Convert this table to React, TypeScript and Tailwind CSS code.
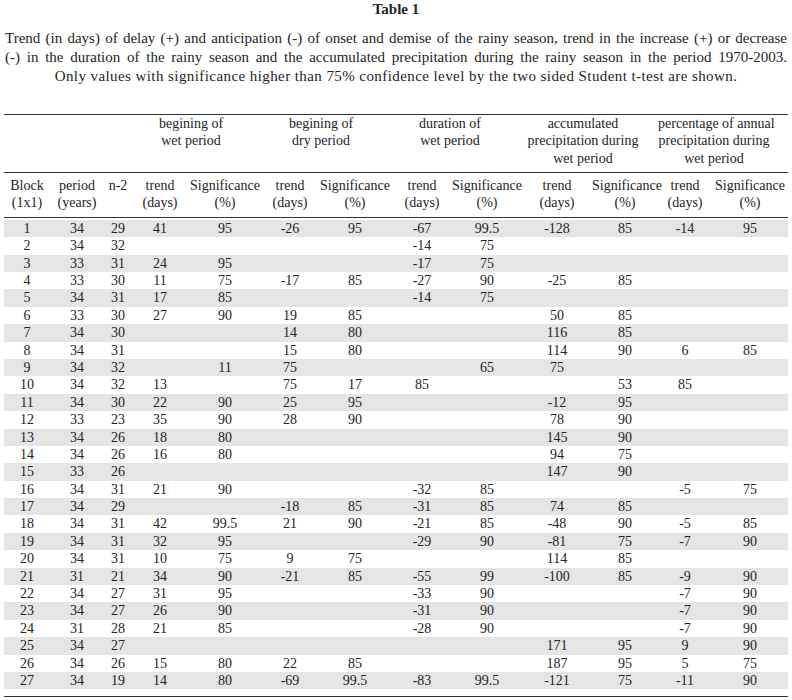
import React from "react";

const rows: string[][] = [
  ["1", "34", "29", "41", "95", "-26", "95", "-67", "99.5", "-128", "85", "-14", "95"],
  ["2", "34", "32", "", "", "", "", "-14", "75", "", "", "", ""],
  ["3", "33", "31", "24", "95", "", "", "-17", "75", "", "", "", ""],
  ["4", "33", "30", "11", "75", "-17", "85", "-27", "90", "-25", "85", "", ""],
  ["5", "34", "31", "17", "85", "", "", "-14", "75", "", "", "", ""],
  ["6", "33", "30", "27", "90", "19", "85", "", "", "50", "85", "", ""],
  ["7", "34", "30", "", "", "14", "80", "", "", "116", "85", "", ""],
  ["8", "34", "31", "", "", "15", "80", "", "", "114", "90", "6", "85"],
  ["9", "34", "32", "", "11", "75", "", "", "65", "75", "", "", ""],
  ["10", "34", "32", "13", "", "75", "17", "85", "", "", "53", "85", ""],
  ["11", "34", "30", "22", "90", "25", "95", "", "", "-12", "95", "", ""],
  ["12", "33", "23", "35", "90", "28", "90", "", "", "78", "90", "", ""],
  ["13", "34", "26", "18", "80", "", "", "", "", "145", "90", "", ""],
  ["14", "34", "26", "16", "80", "", "", "", "", "94", "75", "", ""],
  ["15", "33", "26", "", "", "", "", "", "", "147", "90", "", ""],
  ["16", "34", "31", "21", "90", "", "", "-32", "85", "", "", "-5", "75"],
  ["17", "34", "29", "", "", "-18", "85", "-31", "85", "74", "85", "", ""],
  ["18", "34", "31", "42", "99.5", "21", "90", "-21", "85", "-48", "90", "-5", "85"],
  ["19", "34", "31", "32", "95", "", "", "-29", "90", "-81", "75", "-7", "90"],
  ["20", "34", "31", "10", "75", "9", "75", "", "", "114", "85", "", ""],
  ["21", "31", "21", "34", "90", "-21", "85", "-55", "99", "-100", "85", "-9", "90"],
  ["22", "34", "27", "31", "95", "", "", "-33", "90", "", "", "-7", "90"],
  ["23", "34", "27", "26", "90", "", "", "-31", "90", "", "", "-7", "90"],
  ["24", "31", "28", "21", "85", "", "", "-28", "90", "", "", "-7", "90"],
  ["25", "34", "27", "", "", "", "", "", "", "171", "95", "9", "90"],
  ["26", "34", "26", "15", "80", "22", "85", "", "", "187", "95", "5", "75"],
  ["27", "34", "19", "14", "80", "-69", "99.5", "-83", "99.5", "-121", "75", "-11", "90"],
];

const GRID =
  "grid grid-cols-[46px_54px_28px_56px_74px_56px_74px_60px_70px_70px_66px_54px_76px]";

const colLabels: [string, string][] = [
  ["Block", "(1x1)"],
  ["period", "(years)"],
  ["n-2", ""],
  ["trend", "(days)"],
  ["Significance", "(%)"],
  ["trend", "(days)"],
  ["Significance", "(%)"],
  ["trend", "(days)"],
  ["Significance", "(%)"],
  ["trend", "(days)"],
  ["Significance", "(%)"],
  ["trend", "(days)"],
  ["Significance", "(%)"],
];

export default function App() {
  return (
    <div className="w-[792px] h-[700px] bg-white text-[#242424] font-['Liberation_Serif',serif] overflow-hidden">
      <div className="text-center text-[15px] font-bold leading-[19px]">Table 1</div>
      <div className="mt-[10px] px-[5px] text-[15px] leading-[19px]">
        <div className="text-justify [text-align-last:justify] whitespace-nowrap">
          Trend (in days) of delay (+) and anticipation (-) of onset and demise of the rainy season, trend in the increase (+) or decrease
        </div>
        <div className="text-justify [text-align-last:justify] whitespace-nowrap">
          (-) in the duration of the rainy season and the accumulated precipitation during the rainy season in the period 1970-2003.
        </div>
        <div className="text-center tracking-[0.42px]">
          Only values with significance higher than 75% confidence level by the two sided Student t-test are shown.
        </div>
      </div>

      <div className="mx-[4px] mt-[28px] text-[14px] leading-[17.4px]">
        <div className={`${GRID} border-t border-[#333] h-[58px] text-center whitespace-nowrap`}>
          <div className="col-start-4 col-span-2 pr-[12px]">
            begining of
            <br />
            wet period
          </div>
          <div className="col-span-2 pr-[12px]">
            begining of
            <br />
            dry period
          </div>
          <div className="col-span-2 pr-[14px]">
            duration of
            <br />
            wet period
          </div>
          <div className="col-span-2 pr-[14px]">
            accumulated
            <br />
            precipitation during
            <br />
            wet period
          </div>
          <div className="col-span-2 pr-[18px]">
            percentage of annual
            <br />
            precipitation during
            <br />
            wet period
          </div>
        </div>
        <div className={`${GRID} border-t border-[#333] pt-[4px] pb-[5px] text-center`}>
          {colLabels.map(([a, b], i) => (
            <div key={i} className="whitespace-nowrap">
              {a}
              <br />
              {b}
            </div>
          ))}
        </div>
        <div className="border-t border-[#333] pt-[2px] pb-[7px]">
          {rows.map((r, i) => (
            <div
              key={i}
              className={`${GRID} h-[17.4px] text-center ${i % 2 === 0 ? "bg-[#e5e5e5]" : "bg-white"}`}
            >
              {r.map((c, j) => (
                <div key={j}>{c}</div>
              ))}
            </div>
          ))}
        </div>
        <div className="border-t border-[#333]" />
      </div>
    </div>
  );
}
